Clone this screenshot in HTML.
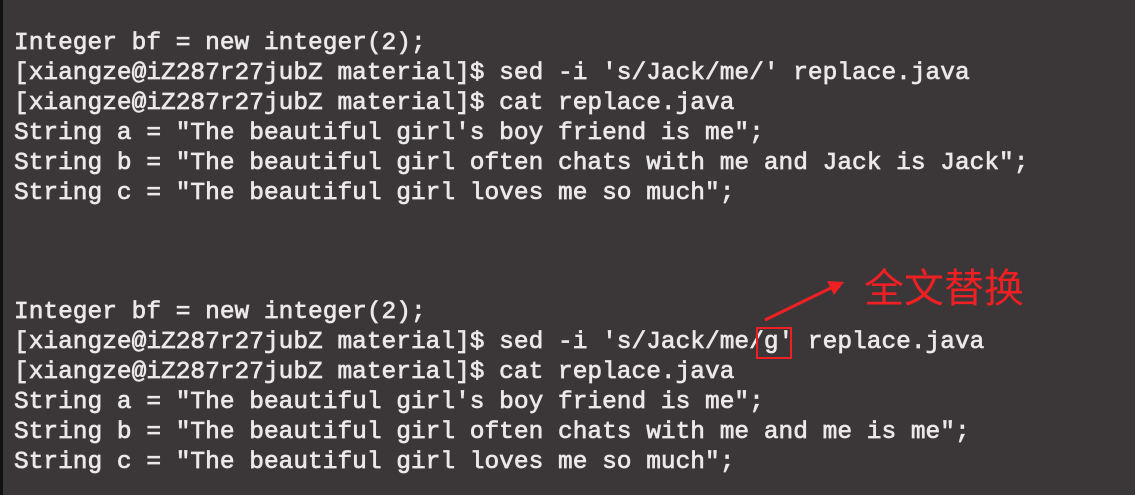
<!DOCTYPE html>
<html><head><meta charset="utf-8"><style>
html,body{margin:0;padding:0;}
body{width:1135px;height:495px;background:#3b3739;position:relative;overflow:hidden;}
.strip{position:absolute;left:0;top:0;width:3px;height:495px;background:#111;}
.l{position:absolute;left:14px;font-family:"Liberation Mono",monospace;font-size:24.5px;color:#ebe8e9;white-space:pre;line-height:30px;-webkit-text-stroke:0.7px #ebe8e9;}
.cn{position:absolute;left:864px;top:262px;font-family:"Noto Sans CJK SC",sans-serif;font-size:40px;color:#ee2024;line-height:46px;}
.box{position:absolute;left:756px;top:327px;width:32px;height:28px;border:2px solid #ee2024;}
</style></head><body>
<div class="strip"></div>
<div class="l" style="top:29px">Integer bf = new integer(2);</div>
<div class="l" style="top:59px">[xiangze@iZ287r27jubZ material]$ sed -i 's/Jack/me/' replace.java</div>
<div class="l" style="top:89px">[xiangze@iZ287r27jubZ material]$ cat replace.java</div>
<div class="l" style="top:119px">String a = "The beautiful girl's boy friend is me";</div>
<div class="l" style="top:149px">String b = "The beautiful girl often chats with me and Jack is Jack";</div>
<div class="l" style="top:179px">String c = "The beautiful girl loves me so much";</div>
<div class="l" style="top:298px">Integer bf = new integer(2);</div>
<div class="l" style="top:328px">[xiangze@iZ287r27jubZ material]$ sed -i 's/Jack/me/g' replace.java</div>
<div class="l" style="top:358px">[xiangze@iZ287r27jubZ material]$ cat replace.java</div>
<div class="l" style="top:388px">String a = "The beautiful girl's boy friend is me";</div>
<div class="l" style="top:418px">String b = "The beautiful girl often chats with me and me is me";</div>
<div class="l" style="top:448px">String c = "The beautiful girl loves me so much";</div>
<div class="box"></div>
<svg style="position:absolute;left:0;top:0" width="1135" height="495">
<line x1="765" y1="320" x2="835" y2="286" stroke="#ee2024" stroke-width="3"/>
<polygon points="844,282 827,281 834,295" fill="#ee2024"/>
</svg>
<div class="cn">全文替换</div>
</body></html>
